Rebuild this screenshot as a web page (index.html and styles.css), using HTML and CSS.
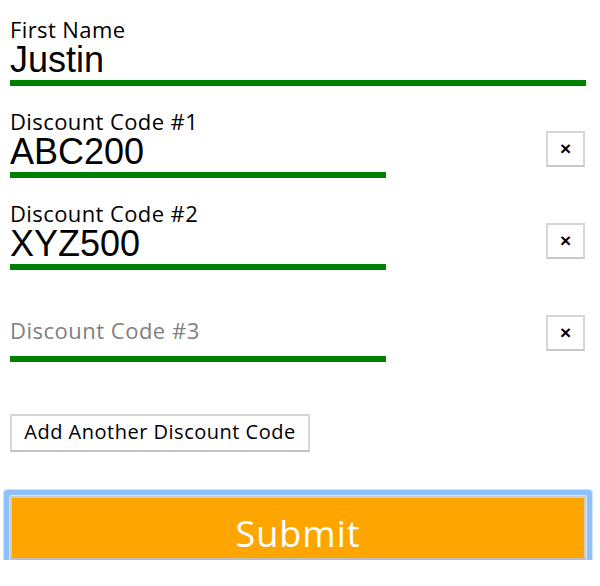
FILE: index.html
```html
<!DOCTYPE html>
<html lang="en">
<head>
<meta charset="utf-8">
<title>Discount Form</title>
<link rel="stylesheet" href="styles.css">
</head>
<body>
<form class="form">
  <div class="field">
    <label class="label" for="fn">First Name</label>
    <input class="input input-wide" id="fn" value="Justin">
  </div>

  <div class="code-row">
    <div class="field">
      <label class="label" for="c1">Discount Code #1</label>
      <input class="input input-code" id="c1" value="ABC200">
    </div>
    <button type="button" class="remove">&times;</button>
  </div>

  <div class="code-row">
    <div class="field">
      <label class="label" for="c2">Discount Code #2</label>
      <input class="input input-code" id="c2" value="XYZ500">
    </div>
    <button type="button" class="remove">&times;</button>
  </div>

  <div class="code-row">
    <div class="field">
      <span class="label"></span>
      <input class="input input-code input-empty" id="c3" placeholder="Discount Code #3">
    </div>
    <button type="button" class="remove">&times;</button>
  </div>

  <div class="actions">
    <button type="button" class="add">Add Another Discount Code</button>
  </div>

  <button type="submit" class="submit">Submit</button>
</form>
</body>
</html>
```

FILE: styles.css
```css
html, body {
  margin: 0;
  padding: 0;
  background: #ffffff;
}

body {
  font-family: "Open Sans", "DejaVu Sans", sans-serif;
  color: #000;
}

.form {
  width: 576px;
  padding: 18px 0 0 10px;
  display: flex;
  flex-direction: column;
}

.field {
  display: flex;
  flex-direction: column;
}

.code-row {
  margin-top: 24px;
  display: flex;
  justify-content: space-between;
  align-items: flex-end;
}

.label {
  display: block;
  font-size: 22px;
  letter-spacing: 0.4px;
  line-height: 22px;
  height: 22px;
  color: #000;
}

.input {
  box-sizing: content-box;
  height: 40px;
  padding: 0;
  margin: 0;
  border: 0;
  border-bottom: 6px solid #008000;
  font-family: "Liberation Sans", Arial, sans-serif;
  font-size: 36px;
  color: #000;
  background: transparent;
  outline: none;
}

.input-wide {
  width: 576px;
}

.input-code {
  width: 376px;
}

.input-empty {
  height: 28px;
  padding-bottom: 12px;
  font-family: "Open Sans", "DejaVu Sans", sans-serif;
  font-size: 22px;
  letter-spacing: 0.5px;
}

.input::placeholder {
  color: #808080;
  opacity: 1;
}

.remove {
  box-sizing: border-box;
  width: 39px;
  height: 36px;
  margin: 0 1px 11px 0;
  padding: 0 0 1px 0;
  background: #fff;
  border: 2px solid #d6d6d6;
  border-bottom-color: #c8c8c8;
  font-family: "Liberation Sans", Arial, sans-serif;
  font-size: 19px;
  font-weight: bold;
  color: #000;
  line-height: 1;
  display: flex;
  align-items: center;
  justify-content: center;
}

.actions {
  margin-top: 52px;
  display: flex;
}

.add {
  box-sizing: border-box;
  width: 300px;
  height: 38px;
  padding: 0 0 4px 0;
  background: #fff;
  border: 2px solid #d6d6d6;
  border-bottom-color: #c4c4c4;
  font-family: "Open Sans", "DejaVu Sans", sans-serif;
  font-size: 20px;
  letter-spacing: 0.5px;
  color: #000;
}

.submit {
  box-sizing: border-box;
  margin-top: 44px;
  width: 576px;
  height: 64px;
  padding: 12px 0 0 0;
  background: #ffa500;
  border: 2px solid #cccccc;
  border-bottom-color: #bdbdbd;
  border-radius: 1px;
  box-shadow: 0 0 0 1px #d9e6f3, 0 0 0 6px #8ec1fb, 0 0 0 7px #cfe4fd;
  font-family: "Open Sans", "DejaVu Sans", sans-serif;
  font-size: 36px;
  letter-spacing: 1px;
  line-height: 1;
  color: #fff;
}
```
